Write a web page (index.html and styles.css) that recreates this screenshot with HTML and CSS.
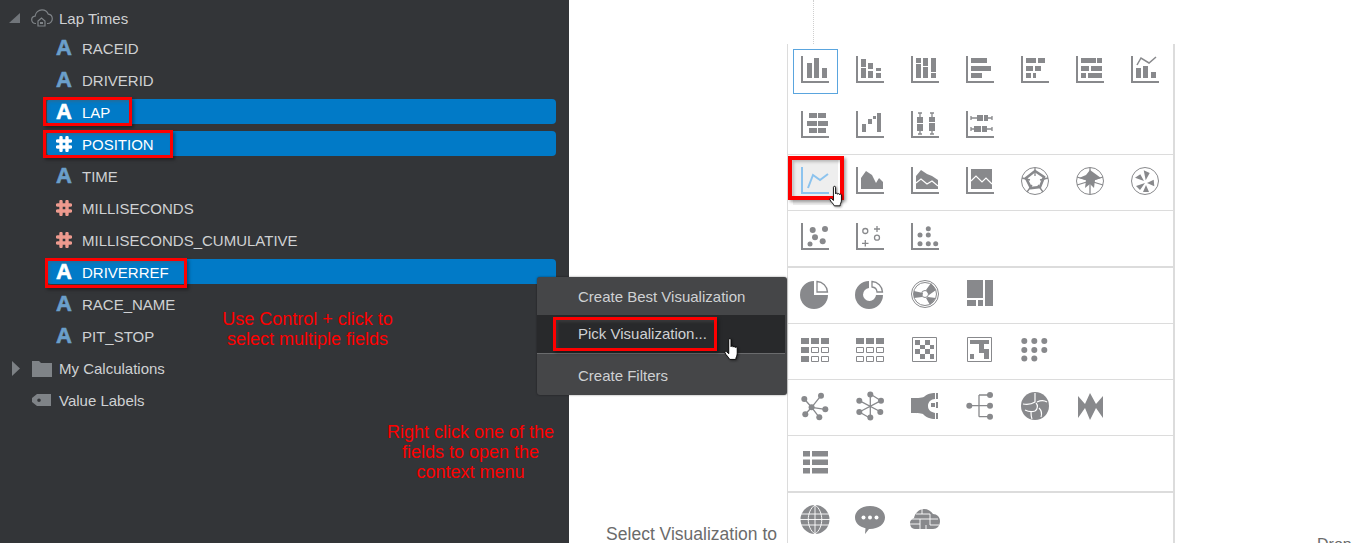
FILE: index.html
```html
<!DOCTYPE html>
<html lang="en">
<head>
    <meta charset="UTF-8">
    <title>Pick Visualization</title>
    <link rel="stylesheet" href="styles.css">
</head>
<body>
    <aside class="sidebar">
        <div class="node node-top">
            <svg class="twisty-open" viewBox="0 0 11 10"><path d="M11 0v10H0z"/></svg>
            <svg class="node-icon" viewBox="0 0 22 18"><path class="line" d="M5 14.5H4.500C2 14.500.7 12.600.7 10.800c0-2 1.400-3.500 3.400-3.700C4.500 3.500 7.500.8 11 .8c2.900 0 5.300 1.700 6.300 4.400 2.300.3 4 2.200 4 4.600 0 2.500-2 4.700-4.500 4.700H16"/><path class="line" d="M7 12l3.500-3 3.500 3v5H7z"/><path d="M9 13h3v2H9z"/></svg>
            <span>Lap Times</span>
        </div>
        <div class="field"><span class="glyph">A</span><span>RACEID</span></div>
        <div class="field"><span class="glyph">A</span><span>DRIVERID</span></div>
        <div class="field selected"><span class="bar"></span><span class="glyph">A</span><span>LAP</span></div>
        <div class="field selected"><span class="bar"></span><svg class="hash" viewBox="0 0 16 16"><path d="M5 1.500v13M11 1.500v13M1.500 5h13M1.500 11h13"/></svg><span>POSITION</span></div>
        <div class="field"><span class="glyph">A</span><span>TIME</span></div>
        <div class="field"><svg class="hash" viewBox="0 0 16 16"><path d="M5 1.500v13M11 1.500v13M1.500 5h13M1.500 11h13"/></svg><span>MILLISECONDS</span></div>
        <div class="field"><svg class="hash" viewBox="0 0 16 16"><path d="M5 1.500v13M11 1.500v13M1.500 5h13M1.500 11h13"/></svg><span>MILLISECONDS_CUMULATIVE</span></div>
        <div class="field selected"><span class="bar"></span><span class="glyph">A</span><span>DRIVERREF</span></div>
        <div class="field"><span class="glyph">A</span><span>RACE_NAME</span></div>
        <div class="field"><span class="glyph">A</span><span>PIT_STOP</span></div>
        <div class="node">
            <svg class="twisty-closed" viewBox="0 0 8 15"><path d="M0 0l8 7.500L0 15z"/></svg>
            <svg class="node-icon" viewBox="0 0 22 18"><path d="M1 2h7l2 2h11v14H1z"/></svg>
            <span>My Calculations</span>
        </div>
        <div class="node">
            <span class="twisty-space"></span>
            <svg class="node-icon" viewBox="0 0 22 18"><path fill-rule="evenodd" d="M6 3h14v12H6L1 11V7zM8 7.500a1.800 1.800 0 1 0 0 3.600 1.800 1.800 0 0 0 0-3.600z"/></svg>
            <span>Value Labels</span>
        </div>
    </aside>

    <main class="canvas">
        <div class="guide"></div>
        <div class="hint-left">Select Visualization to</div>
        <div class="picker">
            <div class="group">
                <div class="cell current"><svg viewBox="0 0 28 28"><path d="M0 0h2v25h26v2H0zM6 7h5v15H6zM13 2h5v20h-5zM21 12h5v10h-5z"/></svg></div>
                <div class="cell"><svg viewBox="0 0 28 28"><path d="M0 0h2v25h26v2H0zM5 3h5v8H5zM5 12h5v10H5zM12 7h5v6h-5zM12 15h5v7h-5zM20 12h5v3h-5zM20 17h5v5h-5z"/></svg></div>
                <div class="cell"><svg viewBox="0 0 28 28"><path d="M0 0h2v25h26v2H0zM5 2h5v5H5zM5 8h5v14H5zM12 2h5v8h-5zM12 11h5v11h-5zM20 2h5v14h-5zM20 17h5v5h-5z"/></svg></div>
                <div class="cell"><svg viewBox="0 0 28 28"><path d="M0 0h2v25h26v2H0zM5 2h16v5H5zM5 10h20v5H5zM5 17h11v5H5z"/></svg></div>
                <div class="cell"><svg viewBox="0 0 28 28"><path d="M0 0h2v25h26v2H0zM5 2h10v5H5zM17 2h7v5h-7zM5 10h7v5H5zM14 10h6v5h-6zM5 17h5v5H5zM12 17h3v5h-3z"/></svg></div>
                <div class="cell"><svg viewBox="0 0 28 28"><path d="M0 0h2v25h26v2H0zM5 2h15v5H5zM21 2h5v5h-5zM5 10h8v5H5zM15 10h11v5H15zM5 17h5v5H5zM12 17h14v5H12z"/></svg></div>
                <div class="cell"><svg viewBox="0 0 28 28"><path d="M0 0h2v25h26v2H0zM5 12h5v10H5zM12 10h5v12h-5zM20 16h5v6h-5z"/><path class="line" d="M6 9l4-7 8 5 7-6"/></svg></div>
                <div class="cell"><svg viewBox="0 0 28 28"><path d="M0 0h2v25h26v2H0zM8 2h8v5H8zM17 2h8v5h-8zM6 10h10v5H6zM17 10h10v5H17zM8 17h8v5H8zM17 17h8v5h-8z"/></svg></div>
                <div class="cell"><svg viewBox="0 0 28 28"><path d="M0 0h2v25h26v2H0zM6 13h4v8H6zM12 8h4v5h-4zM17 5h3v3h-3zM21 2h4v19h-4z"/></svg></div>
                <div class="cell"><svg viewBox="0 0 28 28"><path d="M0 0h2v25h26v2H0zM6 6h6v6H6zM6 13h6v7H6zM18 6h6v5h-6zM18 12h6v8h-6z"/><path class="thin" d="M9 2v4M7 2h4M9 20v3M7 23h4M21 2v4M19 2h4M21 20v3M19 23h4"/></svg></div>
                <div class="cell"><svg viewBox="0 0 28 28"><path d="M0 0h2v25h26v2H0zM11 4h6v6h-6zM18 4h4v6h-4zM8 15h7v6H8zM16 15h5v6h-5z"/><path class="thin" d="M5 7h6M5 5v4M22 7h4M26 5v4M5 18h3M5 16v4M21 18h5M26 16v4"/></svg></div>
            </div>
            <div class="group">
                <div class="cell hovered"><svg viewBox="0 0 28 28"><path class="accent" d="M0 0h2v25h26v2H0z"/><path class="accent-line" d="M7 21l5-13 7 5 8-6"/></svg></div>
                <div class="cell"><svg viewBox="0 0 28 28"><path d="M0 0h2v25h26v2H0zM5 22V11l5-7 6 4 4 8 3-5 4 4v7z"/><path class="cut" d="M19 9l3 3"/></svg></div>
                <div class="cell"><svg viewBox="0 0 28 28"><path d="M0 0h2v25h26v2H0zM5 22V9l5-6 6 4 5 2 6 4v9z"/><path class="cut" d="M5 16l5-4 6 5 5-3 6 5"/></svg></div>
                <div class="cell"><svg viewBox="0 0 28 28"><path d="M0 0h2v25h26v2H0zM5 2h21v20H5z"/><path class="cut" d="M5 14l5-5 6 6 4-4 6 6"/></svg></div>
                <div class="cell"><svg viewBox="0 0 28 28"><circle class="ring" cx="14" cy="14" r="13.500"/><path class="thin" d="M14 1v8M1 11l8 2M27 11l-8 2M6 25l5-7M22 25l-5-7"/><path class="thick" d="M14 4l9 6-4 10-9 1-5-10z"/></svg></div>
                <div class="cell"><svg viewBox="0 0 28 28"><circle class="ring" cx="14" cy="14" r="13.500"/><path class="thin" d="M14 1v26M1 10l26 8M27 10L1 18"/><path d="M14 3l11 8-6 2-1 8-4-4-5 4 1-8-7-2 7-3z"/></svg></div>
                <div class="cell"><svg viewBox="0 0 28 28"><circle class="ring" cx="14" cy="14" r="13.500"/><path d="M12.700 3.300l6 2.700-4 7.300zM22.700 12.700l.6 6.600L16 16zM15 18l3 7h-6zM14 16l-5 7-4-4zM4 10.700l5.300-3.400L13 14z"/></svg></div>
            </div>
            <div class="group thick-bottom">
                <div class="cell"><svg viewBox="0 0 28 28"><path d="M0 0h2v25h26v2H0z"/><circle cx="11.700" cy="7" r="3"/><circle cx="24" cy="6" r="3"/><circle cx="14" cy="14.300" r="3"/><circle cx="21.700" cy="18.300" r="3"/><circle cx="9" cy="21" r="2.500"/></svg></div>
                <div class="cell"><svg viewBox="0 0 28 28"><path d="M0 0h2v25h26v2H0z"/><circle class="thin" cx="9.300" cy="8" r="2.500"/><circle class="thin" cx="21" cy="14.700" r="2.500"/><path class="thin" d="M18 6h6M21 3v6M6 20.300h6.500M9.300 17v6.500"/></svg></div>
                <div class="cell"><svg viewBox="0 0 28 28"><path d="M0 0h2v25h26v2H0z"/><circle cx="17.300" cy="5.700" r="2.500"/><circle cx="9" cy="12" r="2.500"/><circle cx="17.300" cy="12" r="2.500"/><circle cx="9" cy="20.700" r="2.500"/><circle cx="17.300" cy="20.700" r="2.500"/><circle cx="24.700" cy="20.700" r="2.500"/></svg></div>
            </div>
            <div class="group">
                <div class="cell"><svg viewBox="0 0 28 28"><path d="M13 1A14 14 0 1 0 27 15H13z"/><path class="slice" d="M16 1.500A11 11 0 0 1 26.500 12H16z"/></svg></div>
                <div class="cell"><svg viewBox="0 0 28 28"><path fill-rule="evenodd" d="M13 1A14 14 0 1 0 27 15h-7a6.500 6.500 0 1 1-7-7z"/><path class="slice" d="M16 1.500A11 11 0 0 1 26.500 12H21A5.500 5.500 0 0 0 16 7z"/></svg></div>
                <div class="cell"><svg viewBox="0 0 28 28"><circle class="ring" cx="14" cy="14" r="13.500"/><circle class="ring" cx="14" cy="14" r="11.500"/><path d="M3 11l9 2-1 4-8 1zM15 10l5-7 5 7-7 5zM17 17l8 1-6 7-4-7z"/><circle class="ring" cx="14" cy="14" r="3.500"/></svg></div>
                <div class="cell"><svg viewBox="0 0 28 28"><path d="M1 0h16v18H1zM1 20h9v6H1zM12 20h5v6h-5zM19 0h8v26h-8z"/></svg></div>
            </div>
            <div class="group">
                <div class="cell"><svg viewBox="0 0 28 28"><path d="M0 2h8v6H0zM10 2h8v6h-8zM20 2h8v6h-8zM0 11h8v6H0zM0 20h8v6H0z"/><path class="box" d="M10.500 11.500h7v5h-7zM20.500 11.500h7v5h-7zM10.500 20.500h7v5h-7zM20.500 20.500h7v5h-7z"/></svg></div>
                <div class="cell"><svg viewBox="0 0 28 28"><path d="M0 2h8v6H0zM10 2h8v6h-8zM20 2h8v6h-8z"/><path class="box" d="M.500 11.500h7v5h-7zM10.500 11.500h7v5h-7zM20.500 11.500h7v5h-7zM.500 20.500h7v5h-7zM10.500 20.500h7v5h-7zM20.500 20.500h7v5h-7z"/></svg></div>
                <div class="cell"><svg viewBox="0 0 28 28"><path class="box" d="M1.500 1.500h24v24h-24z"/><path d="M4 4h5v5H4zM14 4h5v5h-5zM9 9h5v4H9zM19 9h4v4h-4zM4 13h5v5H4zM14 13h5v5h-5zM9 18h5v5H9zM19 18h4v5h-4z"/></svg></div>
                <div class="cell"><svg viewBox="0 0 28 28"><path class="box" d="M1.500 1.500h24v24h-24z"/><path d="M4 4h19v4h-5v9h-5V8H4zM18 13h5v5h-5zM4 18h4v5H4zM18 18h5v5h-5z"/></svg></div>
                <div class="cell"><svg viewBox="0 0 28 28"><circle cx="3.300" cy="5" r="3"/><circle cx="13.300" cy="5" r="3"/><circle cx="23.300" cy="5" r="3"/><circle cx="3.300" cy="14" r="3"/><circle cx="13.300" cy="14" r="3"/><circle cx="23.300" cy="14" r="3"/><circle cx="3.300" cy="22.500" r="3"/><circle cx="13.300" cy="22.500" r="3"/></svg></div>
            </div>
            <div class="group">
                <div class="cell"><svg viewBox="0 0 28 28"><path class="thin" d="M10.600 15.300L3.300 7M10.600 15.300L20 3.700M10.600 15.300l13.700 2M10.600 15.300l7.700 10M10.600 15.300L4.300 22.300"/><circle cx="10.600" cy="15.300" r="3"/><circle cx="3.300" cy="7" r="3"/><circle cx="20" cy="3.700" r="3"/><circle cx="24.300" cy="17.300" r="3"/><circle cx="18.300" cy="25.300" r="3"/><circle cx="4.300" cy="22.300" r="3"/></svg></div>
                <div class="cell"><svg viewBox="0 0 28 28"><path class="thin" d="M14.300 2v24.300M3.300 8.700l21.700 11.300M25 8.700L3.300 20M14.300 2L25 8.700M3.300 20l11 6.300"/><circle cx="14.300" cy="2.500" r="3"/><circle cx="25" cy="8.700" r="3"/><circle cx="24.300" cy="20" r="3"/><circle cx="14.300" cy="25.500" r="3"/><circle cx="3.300" cy="20" r="3"/><circle cx="3.300" cy="8.700" r="3"/></svg></div>
                <div class="cell"><svg viewBox="0 0 28 28"><path d="M0 6C8 6 12 6 14 4 18 1 22 1 24 1v6C20 7 17 10 17 14c0 4 3 6 7 7v6c-4 0-10-2-12-5-2-1-8-1-12-1z"/><path d="M25 1h2v6h-2zM25 21h2v6h-2zM25 10h2v6h-2zM20 11h4v4h-4z"/></svg></div>
                <div class="cell"><svg viewBox="0 0 28 28"><path class="thin" d="M3 13.700h10M13 3h11M13 13.700h11M13 24.700h11M13 3v21.700"/><circle cx="3.300" cy="13.700" r="3"/><circle cx="24" cy="3" r="3"/><circle cx="24" cy="13.700" r="3"/><circle cx="24" cy="24.700" r="3"/></svg></div>
                <div class="cell"><svg viewBox="0 0 28 28"><circle cx="14" cy="14" r="14"/><path class="cut" d="M14 1v9c-3 2-6 3-12 2M15 11c2 2 2 6-1 8-3 1-6 1-10-1M16 10c4-2 7-2 10 0M18 16c3 3 3 6 2 9M10 20c0 3 0 5 1 7"/></svg></div>
                <div class="cell"><svg viewBox="0 0 28 28"><path d="M2 4l7 8 5-11 6 11 7-8v22l-7-10-6 12-5-12-7 10z"/></svg></div>
            </div>
            <div class="group thick-bottom">
                <div class="cell"><svg viewBox="0 0 28 28"><path d="M2 3h7v5.500H2zM11 3h16v5.500H11zM2 11.500h7V17H2zM11 11.500h16V17H11zM2 20h7v5.500H2zM11 20h16v5.500H11z"/></svg></div>
            </div>
            <div class="group group-last">
                <div class="cell"><svg viewBox="0 0 30 30"><circle cx="15" cy="14.500" r="14.500"/><path class="cut-thin" d="M1 9h28M0 14.500h30M1 20h28M15 0v29M15 0c-9 6-9 23 0 29M15 0c9 6 9 23 0 29"/></svg></div>
                <div class="cell"><svg viewBox="0 0 30 30"><path d="M15 1c8.500 0 15 5 15 11.500S23.500 24 15 24h-1l-4 5 .5-5.800C4.500 22 0 18 0 12.500 0 6 6.500 1 15 1z"/><circle class="dot" cx="8.500" cy="12.500" r="2"/><circle class="dot" cx="15" cy="12.500" r="2"/><circle class="dot" cx="21.500" cy="12.500" r="2"/></svg></div>
                <div class="cell"><svg viewBox="0 0 30 30"><path d="M5 24C1 24 0 20 0 18c0-2 1-4 4-5 1-5 5-9 10-9 4 0 7 2 9 5 4 0 7 3 7 7 0 5-3 8-7 8z"/><path class="cut-thin" d="M0 14h10v10M6 9h14M12 4v5M10 14h10v6h9M20 9v5M0 19h10M16 20v4M20 14h8"/></svg></div>
            </div>
        </div>
        <div class="hint-right">Drop</div>
    </main>

    <div class="menu">
        <div class="menu-item">Create Best Visualization</div>
        <div class="menu-item active">Pick Visualization...</div>
        <div class="menu-item last">Create Filters</div>
    </div>

    <div class="mark mark-lap"></div>
    <div class="mark mark-position"></div>
    <div class="mark mark-driverref"></div>
    <div class="mark mark-pick"></div>
    <div class="mark mark-line"></div>

    <p class="note note-control">Use Control + click to<br>select multiple fields</p>
    <p class="note note-right">Right click one of the<br>fields to open the<br>context menu</p>

    <svg class="hand hand-menu" viewBox="0 0 18 24"><path d="M5 1.500c0-1.300 2.400-1.300 2.400 0V9c0-1 2.200-1 2.200 0v.5c0-1 2.200-1 2.200 0v.5c0-1 2.200-.8 2.200.3V16c0 3-1.500 4-1.500 6.500H6c-1-2.500-4-4.500-5-7-.5-1.500 1-2 2-1l2 2z"/></svg>
    <svg class="hand hand-line" viewBox="0 0 18 24"><path d="M5 1.500c0-1.300 2.400-1.300 2.400 0V9c0-1 2.200-1 2.200 0v.5c0-1 2.200-1 2.200 0v.5c0-1 2.200-.8 2.200.3V16c0 3-1.500 4-1.500 6.500H6c-1-2.500-4-4.500-5-7-.5-1.500 1-2 2-1l2 2z"/></svg>
</body>
</html>
```

FILE: styles.css
```css
html, body {
    height: 100%;
}
body {
    margin: 0;
    height: 543px;
    overflow: hidden;
    display: flex;
    position: relative;
    background-color: white;
    font-family: "Liberation Sans", Arial, sans-serif;
    font-size: 15px;
}

/* left tree */
.sidebar {
    width: 569px;
    flex: none;
    padding-top: 4px;
    box-sizing: border-box;
    background-color: #333538;
    color: #cfd1d3;
}
.node {
    height: 32px;
    display: flex;
    align-items: center;
    position: relative;
}
.node-top {
    height: 28px;
}
.twisty-open {
    width: 11px;
    height: 10px;
    margin-left: 9px;
    margin-right: 12px;
    fill: #71757a;
}
.twisty-closed {
    width: 8px;
    height: 15px;
    margin-left: 12px;
    margin-right: 12px;
    fill: #7d8185;
}
.twisty-space {
    width: 32px;
}
.node-icon {
    width: 22px;
    height: 18px;
    margin-right: 6px;
    margin-left: -1px;
    fill: #7f8387;
    flex: none;
}
.node-icon .line {
    fill: none;
    stroke: #7f8387;
    stroke-width: 1.2;
}
.field {
    height: 32px;
    display: flex;
    align-items: center;
    padding-left: 56px;
    position: relative;
}
.field span {
    position: relative;
}
.field .bar {
    position: absolute;
    left: 47px;
    width: 509px;
    top: 3px;
    height: 25px;
    border-radius: 4px;
    background-color: #017ac7;
}
.glyph {
    width: 26px;
    font-size: 22px;
    line-height: 22px;
    font-weight: bold;
    color: #6b9fca;
    -webkit-text-stroke: .6px #6b9fca;
}
.hash {
    width: 16px;
    height: 16px;
    margin-right: 10px;
    position: relative;
    fill: none;
    stroke: #ee9a8e;
    stroke-width: 3.4;
    stroke-linecap: round;
}
.selected {
    color: white;
}
.selected .glyph {
    color: white;
    -webkit-text-stroke-color: white;
}
.selected .hash {
    stroke: white;
}

/* canvas and picker */
.canvas {
    flex: 1;
    display: flex;
    position: relative;
    color: #6b6b6b;
}
.guide {
    position: absolute;
    left: 244px;
    top: 0;
    height: 44px;
    border-left: 1px dotted #cfcfcf;
}
.hint-left {
    width: 218px;
    height: 543px;
    flex: none;
    box-sizing: border-box;
    padding-top: 525px;
    padding-right: 10px;
    text-align: right;
    font-size: 17.500px;
    line-height: 18px;
    white-space: nowrap;
}
.picker {
    width: 388px;
    height: 499px;
    flex: none;
    margin-top: 44px;
    box-sizing: border-box;
    border-left: 1px solid #dcdcdc;
    border-right: 2px solid #dcdcdc;
    background-color: white;
    overflow: hidden;
}
.hint-right {
    margin-left: 142px;
    height: 543px;
    box-sizing: border-box;
    padding-top: 535px;
    font-size: 16px;
    line-height: 19px;
    overflow: hidden;
}
.group {
    display: flex;
    flex-wrap: wrap;
    gap: 10px;
    padding: 5px;
    border-bottom: 1px solid #dcdcdc;
}
.thick-bottom {
    border-bottom-width: 2px;
}
.group-last {
    border-bottom: none;
    padding-bottom: 0;
}
.cell {
    width: 45px;
    height: 45px;
    box-sizing: border-box;
    padding: 7px 8px;
}
.cell svg {
    display: block;
    width: 28px;
    height: 28px;
    overflow: visible;
    fill: #88898c;
}
.cell svg[viewBox="0 0 30 30"] {
    width: 30px;
    height: 30px;
    margin-left: -1px;
}
.current {
    border: 1px solid #5aa5de;
    padding: 6px 7px;
}
.hovered {
    background-color: #eeeeee;
}
.cell .line {
    fill: none;
    stroke: #88898c;
    stroke-width: 1.5;
}
.cell .thin {
    fill: none;
    stroke: #88898c;
    stroke-width: 1.3;
}
.cell .box {
    fill: none;
    stroke: #88898c;
    stroke-width: 1;
}
.cell .ring {
    fill: none;
    stroke: #88898c;
    stroke-width: 1;
}
.cell .thick {
    fill: none;
    stroke: #88898c;
    stroke-width: 2.6;
}
.cell .cut {
    fill: none;
    stroke: white;
    stroke-width: 1.2;
}
.cell .cut-thin {
    fill: none;
    stroke: white;
    stroke-width: .9;
}
.cell .dot {
    fill: white;
}
.cell .slice {
    fill: white;
    stroke: #88898c;
    stroke-width: 1.3;
}
.cell .accent {
    fill: #8cc3ee;
}
.cell .accent-line {
    fill: none;
    stroke: #8cc3ee;
    stroke-width: 2;
}

/* context menu */
.menu {
    position: absolute;
    left: 537px;
    top: 277px;
    width: 250px;
    height: 118px;
    box-sizing: border-box;
    background-color: #454648;
    border-radius: 3px;
    box-shadow: 0 0 2px rgba(0, 0, 0, .5);
    color: #cfd1d3;
}
.menu-item {
    height: 38px;
    line-height: 39px;
    padding-left: 41px;
}
.active {
    background-color: #28292b;
    line-height: 37px;
    margin-right: 2px;
    border-bottom: 1px solid #6a6b6d;
}
.last {
    height: 41px;
    line-height: 43px;
}

/* red tutorial annotations */
.mark {
    position: absolute;
    box-sizing: border-box;
    border: 3px solid #fe0000;
    box-shadow: 2px 2px 3px rgba(0, 0, 0, .35), inset 2px 2px 3px rgba(90, 90, 90, .35);
}
.mark-lap {
    left: 43px;
    top: 97px;
    width: 89px;
    height: 29px;
}
.mark-position {
    left: 43px;
    top: 130px;
    width: 130px;
    height: 28px;
}
.mark-driverref {
    left: 45px;
    top: 258px;
    width: 142px;
    height: 30px;
}
.mark-pick {
    left: 553px;
    top: 317px;
    width: 164px;
    height: 34px;
}
.mark-line {
    left: 788px;
    top: 156px;
    width: 56px;
    height: 44px;
    border-width: 4px;
}
.note {
    position: absolute;
    margin: 0;
    color: #fe0000;
    font-size: 18px;
    line-height: 20px;
    text-align: center;
    white-space: nowrap;
}
.note-control {
    left: 222px;
    top: 309px;
    width: 171px;
}
.note-right {
    left: 387px;
    top: 422px;
    width: 167px;
}
.hand {
    position: absolute;
    fill: white;
    stroke: black;
    stroke-width: 1;
    filter: drop-shadow(1px 1px 1px rgba(0, 0, 0, .4));
}
.hand-menu {
    left: 724px;
    top: 338px;
    width: 17px;
    height: 23px;
}
.hand-line {
    left: 829px;
    top: 185px;
    width: 16px;
    height: 23px;
}
```
